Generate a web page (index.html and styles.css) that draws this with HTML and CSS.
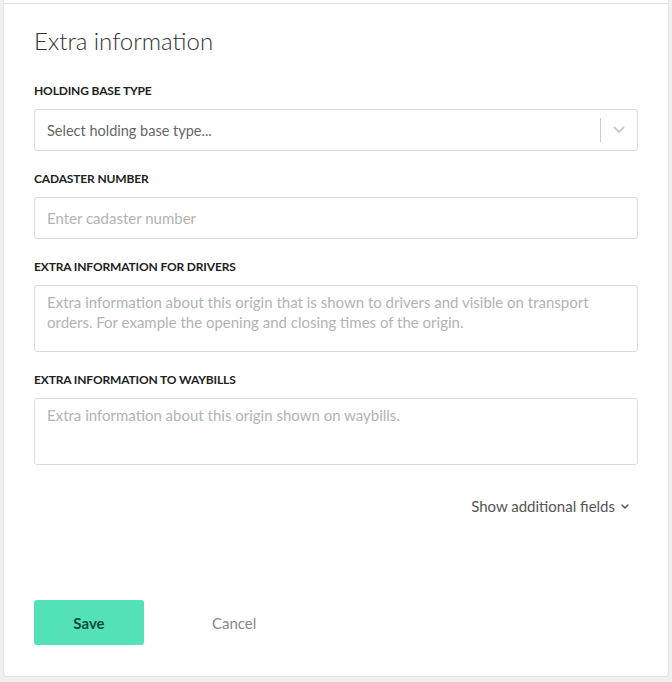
FILE: index.html
```html
<!DOCTYPE html>
<html>
<head>
<meta charset="utf-8">
<link rel="stylesheet" href="styles.css">
</head>
<body>
<div class="card">
  <div class="divider"></div>
  <div class="content">
    <h2 class="title">Extra information</h2>
    <div class="field">
      <div class="label">HOLDING BASE TYPE</div>
      <div class="select">
        <span class="select-value">Select holding base type...</span>
        <span class="select-sep"></span>
        <span class="select-ind">
          <svg width="12" height="8" viewBox="0 0 12 8"><path d="M1.5 1.5 L6 6 L10.5 1.5" fill="none" stroke="#cccccc" stroke-width="2" stroke-linecap="round" stroke-linejoin="round"/></svg>
        </span>
      </div>
    </div>
    <div class="field">
      <div class="label">CADASTER NUMBER</div>
      <div class="input"><span class="ph">Enter cadaster number</span></div>
    </div>
    <div class="field">
      <div class="label">EXTRA INFORMATION FOR DRIVERS</div>
      <div class="textarea"><span class="ph">Extra information about this origin that is shown to drivers and visible on transport orders. For example the opening and closing times of the origin.</span></div>
    </div>
    <div class="field">
      <div class="label">EXTRA INFORMATION TO WAYBILLS</div>
      <div class="textarea"><span class="ph">Extra information about this origin shown on waybills.</span></div>
    </div>
    <div class="more">
      <span>Show additional fields</span>
      <svg width="10" height="7" viewBox="0 0 10 7"><path d="M2 2 L5 5 L8 2" fill="none" stroke="#555555" stroke-width="1.5" stroke-linecap="round" stroke-linejoin="round"/></svg>
    </div>
    <div class="actions">
      <button class="btn-save">Save</button>
      <button class="btn-cancel">Cancel</button>
    </div>
  </div>
</div>
</body>
</html>
```
FILE: styles.css
```css
html, body {
  margin: 0;
  padding: 0;
  background: #f0f0f0;
  font-family: "Lato", "Liberation Sans", sans-serif;
}
body {
  height: 682px;
  overflow: hidden;
}
.card {
  margin-left: 3px;
  width: 666px;
  height: 677px;
  box-sizing: border-box;
  background: #ffffff;
  border: 1px solid #e3e3e3;
  border-top: none;
  border-radius: 0 0 4px 4px;
  padding-top: 3px;
}
.divider {
  height: 1px;
  background: #e3e3e3;
}
.content {
  padding: 0 30px 30px 30px;
}
.title {
  margin: 22px 0 27px 0;
  font-size: 24px;
  line-height: 30px;
  font-weight: 300;
  color: #333333;
}
.field {
  margin-bottom: 20px;
}
.label {
  font-size: 12px;
  line-height: 16px;
  font-weight: 700;
  color: #222222;
  letter-spacing: -0.15px;
  margin-bottom: 10px;
}
.select, .input {
  height: 42px;
  box-sizing: border-box;
  border: 1px solid #dcdcdc;
  border-radius: 3px;
  display: flex;
  align-items: center;
}
.select-value {
  flex: 1;
  padding-left: 12px;
  color: #666666;
  font-size: 14.5px;
}
.select-sep {
  width: 1px;
  height: 24px;
  background: #cccccc;
}
.select-ind {
  width: 36px;
  display: flex;
  justify-content: center;
  align-items: center;
}
.input {
  padding-left: 12px;
  font-size: 15px;
}
.ph {
  color: #b3b3b3;
}
.textarea {
  height: 67px;
  box-sizing: border-box;
  border: 1px solid #dcdcdc;
  border-radius: 3px;
  padding: 6px 12px;
  font-size: 15px;
  line-height: 20px;
}
.more {
  display: flex;
  justify-content: flex-end;
  align-items: center;
  gap: 5px;
  margin-top: 31px;
  padding-right: 8px;
  font-size: 15px;
  line-height: 20px;
  color: #555555;
}
.actions {
  display: flex;
  align-items: center;
  margin-top: 84px;
}
.btn-save {
  width: 110px;
  height: 45px;
  border: none;
  border-radius: 3px;
  background: #53e2b8;
  color: #0e4a3a;
  font-family: "Lato", "Liberation Sans", sans-serif;
  font-size: 15px;
  font-weight: 700;
  padding: 0;
}
.btn-cancel {
  margin-left: 68px;
  border: none;
  background: none;
  padding: 0;
  color: #888888;
  font-family: "Lato", "Liberation Sans", sans-serif;
  font-size: 15px;
}
```
